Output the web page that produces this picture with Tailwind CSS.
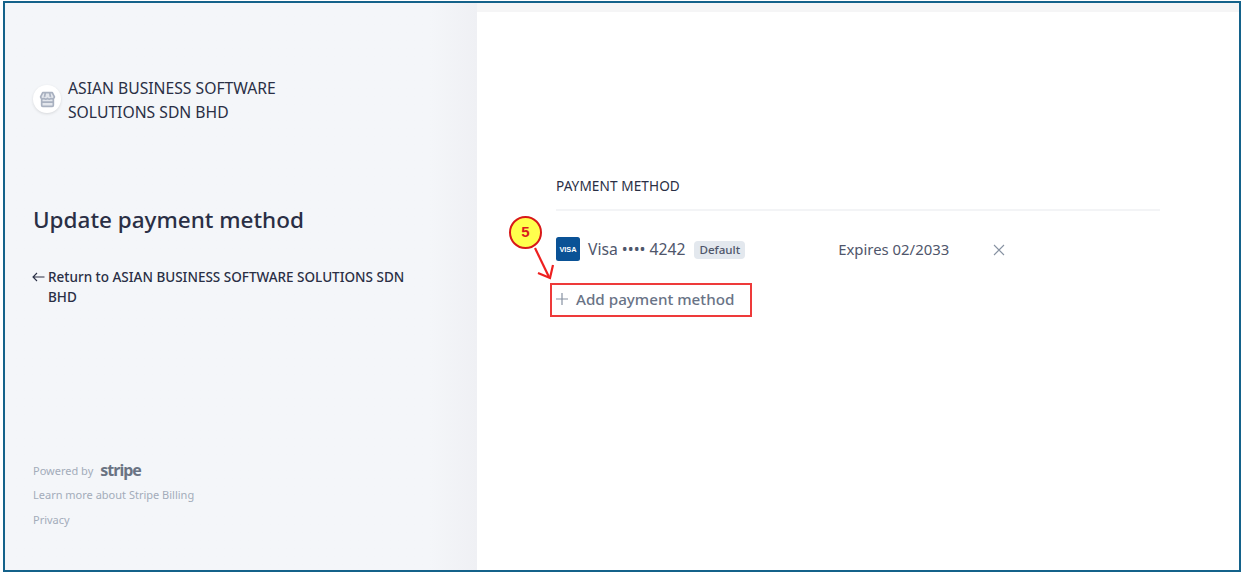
<!DOCTYPE html>
<html>
<head>
<meta charset="utf-8">
<script src="https://cdn.jsdelivr.net/npm/@tailwindcss/browser@4"></script>
</head>
<body class="bg-white overflow-hidden font-['Noto_Sans','Open_Sans',sans-serif]">
<div class="relative ml-[3px] mt-px w-[1238px] h-[571px] border-2 border-[#14628a] bg-[#f5f6f9] flex overflow-hidden">
  <aside class="w-[472px] shrink-0 h-full flex flex-col pl-[28px] pr-[64px] bg-gradient-to-r from-[#f4f6f9] from-90% to-[#eff0f4]">
    <div class="flex items-center gap-[7px] mt-[73px]">
      <div class="w-[28px] h-[28px] -mt-[2px] rounded-full bg-white shadow-[0_1px_3px_rgba(0,0,0,0.12)] flex items-center justify-center shrink-0">
        <svg width="17" height="17" viewBox="0 0 16 16" fill="#e3e6ec" stroke="#a9b1c0" stroke-width="1.6" stroke-linejoin="round"><path d="M2.5 7.5v6a1 1 0 0 0 1 1h9a1 1 0 0 0 1-1v-6"/><path d="M3.5 1.5h9l2 4a2 2 0 0 1-3.2 1.4 2.4 2.4 0 0 1-3.3 0 2.4 2.4 0 0 1-3.3 0A2 2 0 0 1 1.5 5.5z"/><path d="M2.5 10.5h11M6 1.5l-.8 4M10 1.5l.8 4"/></svg>
      </div>
      <div class="text-[15.7px] leading-[24px] text-[#2a2f45] w-[240px]">ASIAN BUSINESS SOFTWARE SOLUTIONS SDN BHD</div>
    </div>
    <h1 class="mt-[80px] text-[22.5px] leading-[32px] font-medium text-[#2a2f45]">Update payment method</h1>
    <div class="mt-[31px] -ml-px flex text-[13.5px] leading-[20px] font-medium text-[#2a2f45]">
      <span class="w-[16px] shrink-0"><svg class="mt-[5px]" width="13" height="10" viewBox="0 0 13 10" fill="none" stroke="#2a2f45" stroke-width="1.1"><path d="M12.5 5H1M5 1 1 5l4 4"/></svg></span>
      <span class="w-[365px]">Return to ASIAN BUSINESS SOFTWARE SOLUTIONS SDN BHD</span>
    </div>
    <div class="mt-auto mb-[40px] text-[11px] text-[#a3acba]">
      <div class="flex items-center h-[20px]">Powered by<span class="ml-[7px] -mt-[2px] text-[16px] font-bold tracking-[-1px] text-[#6a7383]">stripe</span></div>
      <div class="mt-[4px] leading-[20px]">Learn more about Stripe Billing</div>
      <div class="mt-[5px] leading-[20px]">Privacy</div>
    </div>
  </aside>
  <main class="flex-1 flex flex-col">
    <div class="h-[9px] bg-[#f5f5f6] shrink-0"></div>
    <div class="flex-1 bg-white pl-[79px] pr-[79px] pt-[164px]">
      <div class="text-[13.6px] leading-[20px] tracking-[0.1px] text-[#2a2f45] pb-[13px] border-b-2 border-[#f3f4f6]">PAYMENT METHOD</div>
      <div class="flex items-center mt-[25px] h-[28px]">
        <svg width="24" height="24" viewBox="0 0 24 24" class="shrink-0 -mt-[2px]"><rect width="24" height="24" rx="2.5" fill="#0a5296"/><text x="12" y="14.5" text-anchor="middle" font-size="7.4" font-weight="800" fill="#fff" font-family="Liberation Sans">VISA</text></svg>
        <span class="ml-[8px] text-[15.7px] text-[#4f566b]">Visa •••• 4242</span>
        <span class="ml-[9px] h-[18px] px-[5px] rounded-[4px] bg-[#e3e8ee] text-[11.6px] leading-[18px] font-medium text-[#4f566b]">Default</span>
        <span class="ml-[93px] -mt-[2px] text-[14.9px] text-[#4f566b]">Expires 02/2033</span>
        <svg class="ml-[44px]" width="12" height="12" viewBox="0 0 12 12" fill="none" stroke="#8792a2" stroke-width="1.1"><path d="M1 1l10 10M11 1 1 11"/></svg>
      </div>
      <div class="flex items-center mt-[23px] h-[24px]">
        <svg width="12" height="12" viewBox="0 0 12 12" fill="none" stroke="#8792a2" stroke-width="1.2"><path d="M6 0v12M0 6h12"/></svg>
        <span class="ml-[8px] text-[15.2px] font-medium text-[#697386]">Add payment method</span>
      </div>
    </div>
  </main>
  <div class="absolute left-[545px] top-[280px] w-[202px] h-[34px] border-2 border-[#ee3a3a]"></div>
  <div class="absolute left-[504px] top-[213px] w-[33px] h-[33px] rounded-full border-2 border-[#d81818] bg-[#ffff4d] flex items-center justify-center text-[15px] font-bold text-[#d91c1c] font-['Liberation_Sans',sans-serif]">5</div>
  <svg class="absolute left-[525px] top-[244px]" width="28" height="36" viewBox="0 0 28 36" fill="none" stroke="#ee2020" stroke-width="2.2"><path d="M5 1 19 30"/><path d="M8 26l12 5 3-13"/></svg>
</div>
</body>
</html>
